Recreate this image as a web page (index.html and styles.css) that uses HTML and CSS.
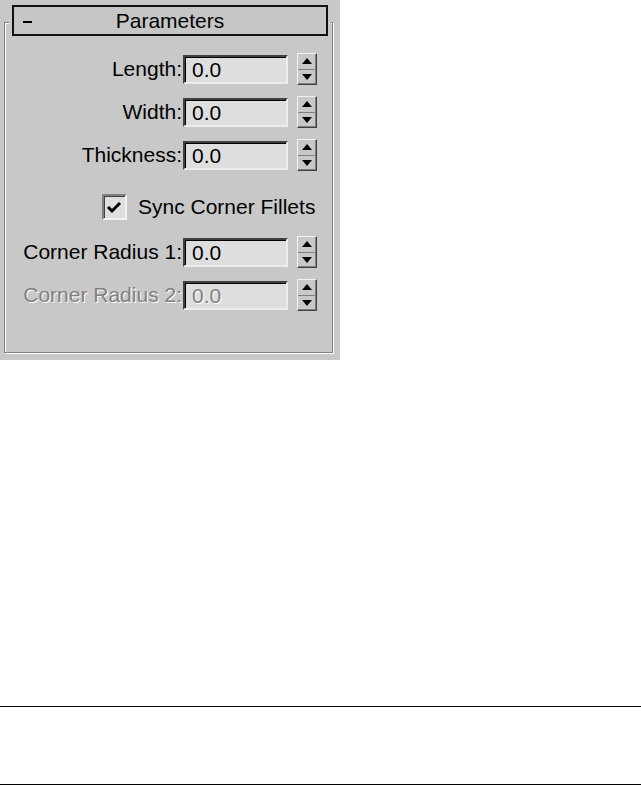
FILE: index.html
```html
<!DOCTYPE html>
<html lang="en">
<head>
    <meta charset="UTF-8">
    <meta name="viewport" content="width=device-width, initial-scale=1.0">
    <title>Parameters</title>
    <link rel="stylesheet" href="styles.css">
</head>
<body>

    <div class="panel">
        <div class="rollout-head">
            <span class="minus"></span>
            <span class="title">Parameters</span>
        </div>

        <div class="group">
            <div class="row">
                <label>Length:</label>
                <div class="field">0.0</div>
                <div class="spin"><div class="spin-up"><i class="up"></i></div><div class="spin-down"><i class="down"></i></div></div>
            </div>
            <div class="row">
                <label>Width:</label>
                <div class="field">0.0</div>
                <div class="spin"><div class="spin-up"><i class="up"></i></div><div class="spin-down"><i class="down"></i></div></div>
            </div>
            <div class="row">
                <label>Thickness:</label>
                <div class="field">0.0</div>
                <div class="spin"><div class="spin-up"><i class="up"></i></div><div class="spin-down"><i class="down"></i></div></div>
            </div>

            <div class="check-row">
                <div class="check">
                    <svg width="17" height="15" viewBox="0 0 17 15"><polyline points="2,7 6,11 14,3" fill="none" stroke="#000" stroke-width="3"/></svg>
                </div>
                <span>Sync Corner Fillets</span>
            </div>

            <div class="row">
                <label>Corner Radius 1:</label>
                <div class="field">0.0</div>
                <div class="spin"><div class="spin-up"><i class="up"></i></div><div class="spin-down"><i class="down"></i></div></div>
            </div>
            <div class="row disabled">
                <label>Corner Radius 2:</label>
                <div class="field">0.0</div>
                <div class="spin"><div class="spin-up"><i class="up"></i></div><div class="spin-down"><i class="down"></i></div></div>
            </div>
        </div>
    </div>

    <div class="rules"></div>

</body>
</html>
```

FILE: styles.css
```css
body { margin: 0; background: #fff; font-family: "Liberation Sans", Arial, sans-serif; font-size: 21px; color: #000; }

.panel { width: 340px; height: 360px; padding-top: 5px; box-sizing: border-box; background: #c8c8c8; }

.rollout-head { position: relative; z-index: 1; height: 31px; margin: 0 12px; box-sizing: border-box; border: 2px solid #111; background: #c6c6c6; box-shadow: 0 0 0 3px #c8c8c8; display: flex; align-items: center; justify-content: center; }
.rollout-head .minus { position: absolute; left: 9px; top: 14px; width: 9px; height: 2px; background: #000; }
.rollout-head .title { line-height: 1; }

.group { width: 329px; height: 331px; margin: -14px 0 0 4px; padding-top: 30px; box-sizing: border-box; border: 1px solid #808080; box-shadow: inset 1px 1px 0 #fff, 1px 1px 0 #fff; }

.row { display: flex; justify-content: flex-end; align-items: center; height: 32px; margin-bottom: 11px; padding-right: 15px; }
.row label { margin-right: 1px; white-space: nowrap; }

.field { width: 105px; height: 29px; box-sizing: border-box; padding-left: 7px; line-height: 25px; background: #dedede; border: 2px solid; border-color: #404040 #ececec #ececec #404040; box-shadow: inset 1px 1px 0 #000; }

.spin { width: 20px; height: 32px; margin-left: 9px; box-sizing: border-box; display: flex; flex-direction: column; border: 1px solid; border-color: #f2f2f2 #404040 #404040 #f2f2f2; box-shadow: inset -1px -1px 0 #808080; }
.spin-up, .spin-down { flex: 1; display: flex; align-items: center; justify-content: center; }
.spin-up { border-bottom: 1px solid #808080; }
.up { width: 0; height: 0; border-left: 5px solid transparent; border-right: 5px solid transparent; border-bottom: 6px solid #000; }
.down { width: 0; height: 0; border-left: 5px solid transparent; border-right: 5px solid transparent; border-top: 6px solid #000; }

.check-row { display: flex; align-items: center; height: 26px; margin: 23px 0 16px; padding-left: 97px; }
.check { width: 25px; height: 26px; box-sizing: border-box; margin-right: 11px; display: flex; align-items: center; justify-content: center; background: #dedede; border: 2px solid; border-color: #808080 #f2f2f2 #f2f2f2 #808080; box-shadow: inset 1px 1px 0 #404040; }

.disabled label, .disabled .field { color: #808080; text-shadow: 1px 1px 0 #fff; }

.rules { margin-top: 346px; height: 77px; border-top: 1px solid #000; border-bottom: 1px solid #000; }
```
